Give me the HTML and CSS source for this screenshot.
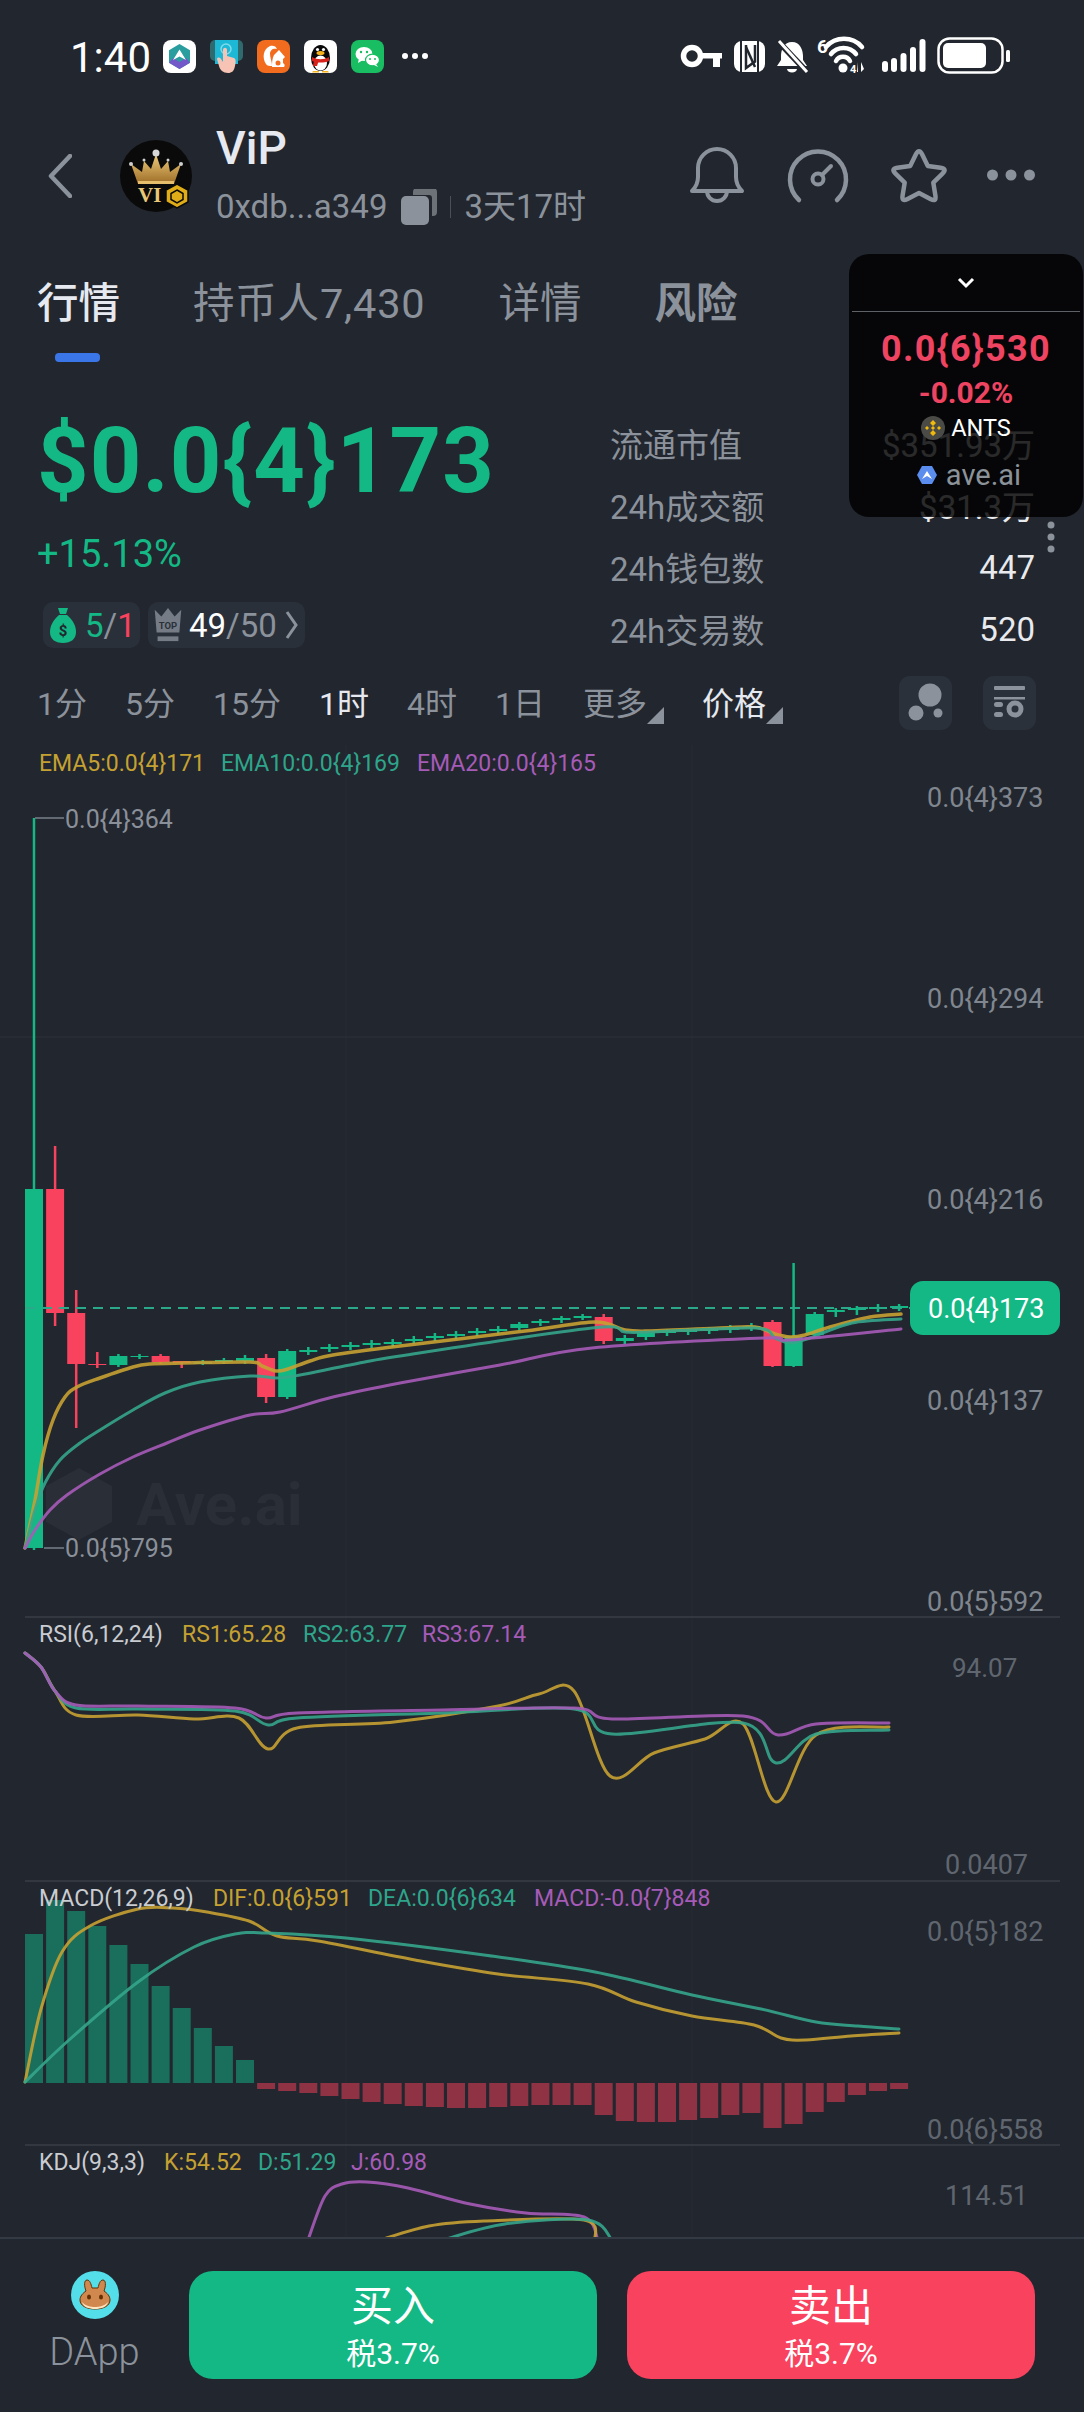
FILE: index.html
```html
<!DOCTYPE html>
<html lang="zh-CN">
<head>
    <meta charset="UTF-8">
    <meta name="viewport" content="width=device-width, initial-scale=1.0">
    <title>ViP 行情</title>
    <link rel="stylesheet" href="styles.css">
</head>
<body>

<div class="page">
    <div class="status-bar">
        <span class="clock">1:40</span>
        <div class="app-icons">
            <svg class="app-icon" viewBox="0 0 33 33"><rect width="33" height="33" rx="8" fill="#fff"/><path d="M16.5 4 27 10.2v12.6L16.5 29 6 22.8V10.2z" fill="#2a9d9e"/><path d="M6 22.8 10 18l6.5 4 6.5-4 4 4.8L16.5 29z" fill="#7358c9"/><path d="M16.5 9.5 23 20l-6.5-3.5L10 20z" fill="#fff"/></svg>
            <svg class="app-icon" viewBox="0 0 33 33"><rect y="0" width="33" height="21" rx="5" fill="#2f6b6e"/><rect x="5" y="0" width="23" height="24" fill="#1cb8d6"/><circle cx="16" cy="9" r="5" fill="none" stroke="#7fdcec" stroke-width="1.5"/><path d="M13 10c0-3 4-3 4 0v6l7 2c2 1 2 4 1 8-1 5-3 7-7 7-5 0-8-3-9-7l-2-7c0-2 3-2 4 0l2 3z" fill="#f6c3b4"/></svg>
            <svg class="app-icon" viewBox="0 0 33 33"><rect width="33" height="33" rx="8" fill="#f26c1f"/><path d="M9 24C5 18 6 9 13 6c3-1 6 0 7 3-4-1-7 1-7 5 0 4 2 7 2 12-2 0-5 0-6-2z" fill="#fff"/><path d="M17 15l5-5 6 7-2 2 0 4c2 1 2 3 1 4H15c0-4 0-8 2-12z" fill="#fff"/><circle cx="21" cy="23" r="2.5" fill="#f26c1f"/></svg>
            <svg class="app-icon" viewBox="0 0 33 33"><rect width="33" height="33" rx="7" fill="#fff"/><ellipse cx="16.5" cy="18" rx="9.5" ry="13" fill="#0a0a0a"/><ellipse cx="16.5" cy="23" rx="6.5" ry="7.5" fill="#fff"/><path d="M8 17c5 3 12 3 17 0v4c-5 2-12 2-17 0z" fill="#d8231c"/><path d="M10 20h5l-2 6h-4z" fill="#d8231c"/><ellipse cx="16.5" cy="13" rx="4" ry="2" fill="#f5b21b"/><circle cx="13.5" cy="9.5" r="1.6" fill="#fff"/><circle cx="19.5" cy="9.5" r="1.6" fill="#fff"/><path d="M9 31h6v1.5H8zM18 31h6l1 1.5h-7z" fill="#f5b21b"/></svg>
            <svg class="app-icon" viewBox="0 0 33 33"><rect width="33" height="33" rx="8" fill="#19be62"/><ellipse cx="13" cy="14" rx="8.5" ry="7" fill="#fff"/><path d="M8 18l-1 5 5-3z" fill="#fff"/><ellipse cx="21.5" cy="20" rx="7" ry="5.8" fill="#fff" stroke="#19be62" stroke-width="1.2"/><path d="M25 24l2 3-4-2z" fill="#fff"/><circle cx="10" cy="12" r="1.2" fill="#19be62"/><circle cx="16" cy="12" r="1.2" fill="#19be62"/><circle cx="19" cy="19" r="1" fill="#19be62"/><circle cx="24" cy="19" r="1" fill="#19be62"/></svg>
        </div>
        <svg class="status-more" viewBox="0 0 26 6"><circle cx="3" cy="3" r="3"/><circle cx="13" cy="3" r="3"/><circle cx="23" cy="3" r="3"/></svg>
        <svg class="status-right" viewBox="678 36 336 40">
            <circle cx="692" cy="56" r="8.5" fill="none" stroke="#fff" stroke-width="5.5"/>
            <rect x="700" y="53" width="22" height="5.5" fill="#fff"/><rect x="713" y="55" width="7" height="12" fill="#fff"/>
            <rect x="734" y="41" width="31" height="31" rx="8" fill="#fff"/>
            <path d="M741 40v33M758 40v33" stroke="#22262e" stroke-width="2"/><path d="M746 45v23l9-6.5V45" fill="none" stroke="#22262e" stroke-width="2.5"/><path d="M746 47l9 20" stroke="#22262e" stroke-width="2.5"/>
            <path d="M792 42c-8 0-11 8-11 14v4l-4 6h30l-4-6v-4c0-6-3-14-11-14z" fill="#fff"/><path d="M787 69a5 3.5 0 0 0 10 0z" fill="#fff"/>
            <path d="M777 40l31 33" stroke="#22262e" stroke-width="6"/><path d="M779 41l28 31" stroke="#fff" stroke-width="3"/>
            <text class="st-small" x="817" y="53">6</text>
            <path d="M826 47a24 24 0 0 1 36 0M831 54a16 16 0 0 1 25 0M836 61a8 8 0 0 1 14 0" fill="none" stroke="#fff" stroke-width="4.5" stroke-linecap="round"/>
            <circle cx="843" cy="68" r="4.5" fill="#fff"/><text class="st-tiny" x="850" y="73">4</text><path d="M858 62v10h-1zM861 62v10l3-3z" fill="#fff"/>
            <rect x="882" y="61" width="6" height="11" rx="3" fill="#fff"/><rect x="891" y="58" width="6" height="14" rx="3" fill="#fff"/><rect x="900.5" y="53" width="6" height="19" rx="3" fill="#fff"/><rect x="910" y="47" width="6" height="25" rx="3" fill="#fff"/><rect x="919.5" y="39" width="6" height="33" rx="3" fill="#fff"/>
            <rect x="938.5" y="38.5" width="64" height="34" rx="11" fill="none" stroke="#fff" stroke-width="2.5"/><rect x="943" y="43" width="43" height="25" rx="5" fill="#fff"/><rect x="1006" y="50" width="4" height="12" rx="1.5" fill="#fff"/>
        </svg>
    </div>

    <div class="top-header">
        <svg class="back-icon" viewBox="0 0 24 44"><path d="M22 2 3 22l19 20" fill="none" stroke="#8b929b" stroke-width="4.5" stroke-linecap="round" stroke-linejoin="round"/></svg>
        <svg class="avatar" viewBox="0 0 72 72">
            <defs><linearGradient id="gold" x1="0" y1="0" x2="0" y2="1"><stop offset="0" stop-color="#f0cd7c"/><stop offset="1" stop-color="#9c6c26"/></linearGradient></defs>
            <circle cx="36" cy="36" r="36" fill="#0a0a0a"/>
            <path d="M18 44 11 24l11 8 2-11 7 8 5-15 5 15 7-8 2 11 11-8-7 20z" fill="url(#gold)"/>
            <circle cx="36" cy="13" r="3.5" fill="#d8d8d8"/><circle cx="11" cy="24" r="2" fill="#cfcfcf"/><circle cx="61" cy="24" r="2" fill="#cfcfcf"/><circle cx="24" cy="20" r="1.5" fill="#cfcfcf"/><circle cx="48" cy="20" r="1.5" fill="#cfcfcf"/><rect x="18" y="41" width="36" height="3" fill="#e5bd6b"/>
            <text class="avatar-text" x="18" y="62">VI</text>
            <path d="M57 44 68 50v12l-11 6-11-6V50z" fill="#e0ad18" stroke="#0a0a0a" stroke-width="1.5"/><path d="M57 50l6 3.5v6L57 63l-6-3.5v-6z" fill="none" stroke="#0a0a0a" stroke-width="1.5"/>
        </svg>
        <div class="token-info">
            <div class="token-name">ViP</div>
            <div class="token-sub">
                <span>0xdb...a349</span>
                <svg class="copy-icon" viewBox="0 0 36 36"><path d="M12 3a4 4 0 0 1 4-4h16a4 4 0 0 1 4 4v20a4 4 0 0 1-4 4h-1V9a3 3 0 0 0-3-3H12z" fill="#6d7279"/><rect y="7" width="28" height="29" rx="5" fill="#8b929b"/></svg>
                <i class="sub-divider"></i>
                <span>3天17时</span>
            </div>
        </div>
        <div class="header-actions">
            <svg class="act-bell" viewBox="0 0 60 60"><path d="M5 45q6-6 6-14v-9a19 19 0 0 1 38 0v9q0 8 6 14zM20 45a10 10 0 0 0 20 0" fill="none" stroke="#8b929b" stroke-width="4" stroke-linejoin="round"/></svg>
            <svg class="act-gauge" viewBox="0 0 64 56"><path d="M13 52A28 28 0 1 1 51 52" fill="none" stroke="#8b929b" stroke-width="4.5" stroke-linecap="round"/><circle cx="32" cy="31" r="5.5" fill="none" stroke="#8b929b" stroke-width="4"/><path d="M36 27l9-9" stroke="#8b929b" stroke-width="4" stroke-linecap="round"/></svg>
            <svg class="act-star" viewBox="0 0 60 60"><path d="M26.9 8.3Q30 2 33.1 8.3L38.8 19.9 51.6 21.7Q58.5 22.7 53.5 27.6L44.3 36.6 46.4 49.6Q47.6 56.3 41.4 53L30 47 18.6 53Q12.4 56.3 13.6 49.4L15.7 36.6 6.5 27.6Q1.5 22.7 8.4 21.7L21.2 19.9Z" fill="none" stroke="#8b929b" stroke-width="4.5" stroke-linejoin="round"/></svg>
            <svg class="act-more" viewBox="0 0 48 12"><circle cx="5.5" cy="6" r="5.5"/><circle cx="24" cy="6" r="5.5"/><circle cx="42.5" cy="6" r="5.5"/></svg>
        </div>
    </div>

    <div class="tabs">
        <div class="tab active">行情<i class="tab-line"></i></div>
        <div class="tab holders">持币人7,430</div>
        <div class="tab">详情</div>
        <div class="tab risk">风险</div>
    </div>

    <div class="summary">
        <div class="summary-left">
            <div class="big-price">$0.0{4}173</div>
            <div class="big-change">+15.13%</div>
            <div class="pills">
                <div class="pill bag">
                    <svg class="pill-icon" viewBox="0 0 26 36"><path d="M8 1h10l-2 6h-6zM9 8h8c6 5 9 11 9 17 0 7-5 11-13 11S0 32 0 25c0-6 3-12 9-17z" fill="#14b885"/><text class="bag-sign" x="13" y="29">$</text></svg>
                    <span class="green-text">5</span><span class="gray-text">/</span><span class="red-text">1</span>
                </div>
                <div class="pill rank">
                    <svg class="pill-icon crown" viewBox="0 0 30 38"><path d="M1 3l7 7 7-9 7 9 7-7-2 24H3z" fill="#757c86"/><text class="top-sign" x="15" y="23">TOP</text><rect x="4" y="31" width="22" height="5" fill="#757c86"/></svg>
                    <span class="white-text">49</span><span class="gray-text">/50</span>
                    <svg class="pill-arrow" viewBox="0 0 13 30"><path d="M2 2l9 13-9 13" fill="none" stroke="#8b929b" stroke-width="3"/></svg>
                </div>
            </div>
        </div>
        <div class="stats">
            <div class="stat-row"><span>流通市值</span><b>$351.93万</b></div>
            <div class="stat-row"><span>24h成交额</span><b>$31.3万</b></div>
            <div class="stat-row"><span>24h钱包数</span><b>447</b></div>
            <div class="stat-row"><span>24h交易数</span><b>520</b></div>
        </div>
    </div>

    <div class="timeframes">
        <span>1分</span>
        <span>5分</span>
        <span>15分</span>
        <span class="on">1时</span>
        <span>4时</span>
        <span>1日</span>
        <span class="with-corner">更多<i class="corner"></i></span>
        <span class="with-corner on">价格<i class="corner"></i></span>
        <div class="tool-buttons">
            <div class="tool-btn"><svg viewBox="0 0 53 54"><circle cx="31" cy="19" r="11.5" fill="#8b929b"/><circle cx="17" cy="37" r="7.5" fill="#8b929b"/><circle cx="39" cy="37" r="4.5" fill="#8b929b"/></svg></div>
            <div class="tool-btn"><svg viewBox="0 0 53 54"><rect x="11" y="10" width="31" height="4" rx="1" fill="#8b929b"/><rect x="11" y="21" width="31" height="2.5" fill="#8b929b"/><rect x="11" y="26" width="9" height="5" rx="2.5" fill="#8b929b"/><rect x="11" y="36" width="9" height="5" rx="2.5" fill="#8b929b"/><circle cx="32" cy="33" r="6" fill="none" stroke="#8b929b" stroke-width="5"/></svg></div>
        </div>
    </div>

    <svg id="chart" class="chart" viewBox="0 740 1084 1497">
        <g id="grid"></g>

        <text class="lg ema5" x="39" y="771">EMA5:0.0{4}171</text>
        <text class="lg ema10" x="221" y="771">EMA10:0.0{4}169</text>
        <text class="lg ema20" x="417" y="771">EMA20:0.0{4}165</text>

        <g id="wm" class="watermark">
            <path d="M79 1468l33 18v36l-33 18-33-18v-36z"/>
            <text class="wm-text" x="136" y="1525">Ave.ai</text>
        </g>

        <g id="candles"></g>
        <g id="lines"></g>

        <text class="axis" x="927" y="807">0.0{4}373</text>
        <text class="axis" x="927" y="1008">0.0{4}294</text>
        <text class="axis" x="927" y="1209">0.0{4}216</text>
        <text class="axis" x="927" y="1410">0.0{4}137</text>
        <text class="axis" x="927" y="1611">0.0{5}592</text>

        <path class="tick" d="M35 818H64M44 1548H64"/>
        <text class="mark" x="65" y="828">0.0{4}364</text>
        <text class="mark" x="65" y="1557">0.0{5}795</text>

        <rect class="now-pill" x="910" y="1281" width="150" height="54" rx="13"/>
        <text class="now-text" x="928" y="1318">0.0{4}173</text>

        <text class="lg name" x="39" y="1642">RSI(6,12,24)</text>
        <text class="lg ema5" x="182" y="1642">RS1:65.28</text>
        <text class="lg ema10" x="303" y="1642">RS2:63.77</text>
        <text class="lg ema20" x="422" y="1642">RS3:67.14</text>
        <text class="axis dim small" x="952" y="1677">94.07</text>
        <text class="axis dim" x="945" y="1874">0.0407</text>

        <text class="lg name" x="39" y="1906">MACD(12,26,9)</text>
        <text class="lg ema5" x="213" y="1906">DIF:0.0{6}591</text>
        <text class="lg ema10" x="368" y="1906">DEA:0.0{6}634</text>
        <text class="lg ema20" x="534" y="1906">MACD:-0.0{7}848</text>
        <text class="axis dim" x="927" y="1941">0.0{5}182</text>
        <text class="axis dim" x="927" y="2139">0.0{6}558</text>

        <text class="lg name" x="39" y="2170">KDJ(9,3,3)</text>
        <text class="lg ema5" x="164" y="2170">K:54.52</text>
        <text class="lg ema10" x="258" y="2170">D:51.29</text>
        <text class="lg ema20" x="351" y="2170">J:60.98</text>
        <text class="axis dim" x="945" y="2205">114.51</text>
    </svg>

    <div class="bottom-bar">
        <div class="dapp">
            <svg class="dapp-icon" viewBox="0 0 48 48"><circle cx="24" cy="24" r="24" fill="#53dee9"/><path d="M15 20c-2-5-2-11 1-11 3 0 4 4 5 8h6c1-4 2-8 5-8 3 0 3 6 1 11 3 2 6 5 6 9 0 6-7 9-15 9S9 35 9 29c0-4 3-7 6-9z" fill="#d1884f" stroke="#633001" stroke-width="1"/><path d="M11 31c3 4 9 5 13 5s10-1 13-5c-1 5-7 7-13 7s-12-2-13-7z" fill="#fee4bf"/><ellipse cx="18" cy="26" rx="2" ry="2.6" fill="#633001"/><ellipse cx="30" cy="26" rx="2" ry="2.6" fill="#633001"/></svg>
            <span>DApp</span>
        </div>
        <div class="trade-btn buy"><strong>买入</strong><small>税3.7%</small></div>
        <div class="trade-btn sell"><strong>卖出</strong><small>税3.7%</small></div>
    </div>

    <div class="float-card">
        <div class="card-head"><svg viewBox="0 0 18 12"><path d="M2 2l7 7 7-7" fill="none" stroke="#fff" stroke-width="3"/></svg></div>
        <div class="card-price">0.0{6}530</div>
        <div class="card-change">-0.02%</div>
        <div class="card-pair">
            <svg viewBox="0 0 24 24"><circle cx="12" cy="12" r="12" fill="#4a4a46"/><path d="M12 4l3 3-3 3-3-3zM6 10l2 2-2 2-2-2zM18 10l2 2-2 2-2-2zM12 14l3 3-3 3-3-3zM12 10l2 2-2 2-2-2z" fill="#f0b90b"/></svg>
            <span>ANTS</span>
        </div>
        <div class="card-site">
            <svg viewBox="0 0 20 20"><path d="M5 1h10l5 9-5 9H5l-5-9z" fill="#5b8def"/><path d="M10 6l5 8-5-3-5 3z" fill="#fff"/></svg>
            <span>ave.ai</span>
        </div>
    </div>
    <svg class="kebab" viewBox="0 0 8 32"><circle cx="4" cy="4" r="3.5"/><circle cx="4" cy="16" r="3.5"/><circle cx="4" cy="28" r="3.5"/></svg>
</div>

<script src="chart.js"></script>
</body>
</html>
```

FILE: styles.css
```css
* {
    box-sizing: border-box;
}
html, body {
    margin: 0;
    padding: 0;
}
body {
    font-family: Roboto, "Noto Sans CJK SC", sans-serif;
    background-color: #22262e;
    color: #8b929b;
}
.page {
    position: relative;
    width: 1084px;
    height: 2412px;
    overflow: hidden;
    display: flex;
    flex-direction: column;
}

/* status bar */
.status-bar {
    height: 112px;
    flex: none;
    display: flex;
    align-items: center;
    padding-left: 70px;
}
.clock {
    font-size: 42px;
    color: #fff;
    width: 93px;
    padding-top: 2px;
}
.app-icons {
    display: flex;
    gap: 14px;
}
.app-icon {
    width: 33px;
    height: 33px;
    display: block;
}
.status-more {
    width: 26px;
    height: 6px;
    margin-left: 18px;
    fill: #fff;
}
.status-right {
    width: 336px;
    height: 40px;
    margin-left: auto;
    margin-right: 70px;
}
.st-small {
    font-size: 19px;
    font-weight: 700;
    fill: #fff;
}
.st-tiny {
    font-size: 11px;
    font-weight: 700;
    fill: #fff;
}

/* header */
.top-header {
    height: 128px;
    flex: none;
    display: flex;
    align-items: center;
    padding-left: 48px;
}
.back-icon {
    width: 24px;
    height: 44px;
    flex: none;
}
.avatar {
    width: 72px;
    height: 72px;
    flex: none;
    margin-left: 48px;
}
.avatar-text {
    font-family: "Liberation Serif", serif;
    font-size: 21px;
    font-weight: 700;
    fill: #e8c777;
}
.token-info {
    margin-left: 24px;
    margin-top: -4px;
}
.token-name {
    font-size: 46px;
    line-height: 54px;
    font-weight: 500;
    color: #e6e9ef;
}
.token-sub {
    display: flex;
    align-items: center;
    font-size: 33px;
    line-height: 42px;
    margin-top: 11px;
}
.copy-icon {
    width: 36px;
    height: 36px;
    margin-left: 14px;
}
.sub-divider {
    width: 1px;
    height: 22px;
    background-color: #4a5058;
    margin: 0 13px;
}
.header-actions {
    position: absolute;
    left: 687px;
    top: 146px;
    width: 352px;
    height: 60px;
    display: flex;
    align-items: center;
}
.act-bell { width: 60px; height: 60px; }
.act-gauge { width: 64px; height: 56px; margin-left: 39px; }
.act-star { width: 60px; height: 60px; margin-left: 39px; }
.act-more { width: 48px; height: 12px; margin-left: 38px; fill: #8b929b; margin-top: -2px; }

/* tabs */
.tabs {
    height: 130px;
    flex: none;
    margin-bottom: 44px;
    padding: 40px 0 0 37px;
    display: flex;
    gap: 73px;
    font-size: 41.5px;
    line-height: 48px;
}
.tab.active {
    color: #e6e9ef;
    font-weight: 500;
}
.tab.risk {
    font-weight: 700;
}
.tab.holders {
    letter-spacing: 0.8px;
}
.tab-line {
    display: block;
    width: 45px;
    height: 9px;
    margin: 25px 0 0 18px;
    border-radius: 4px;
    background-color: #3b76e8;
}

/* price and stats */
.summary {
    display: flex;
    height: 248px;
    flex: none;
    padding: 0 49px 0 37px;
}
.summary-left {
    width: 573px;
    flex: none;
}
.big-price {
    font-size: 90px;
    line-height: 92px;
    margin-top: 2px;
    font-weight: 700;
    color: #14b885;
    letter-spacing: 1.1px;
}
.big-change {
    font-size: 38px;
    line-height: 48px;
    margin-top: 22px;
    color: #14b885;
}
.pills {
    display: flex;
    gap: 8px;
    margin-top: 24px;
    margin-left: 6px;
}
.pill {
    height: 46px;
    display: flex;
    align-items: center;
    border-radius: 10px;
    background-color: #2a303a;
    font-size: 33px;
}
.pill.bag {
    width: 97px;
    padding-left: 7px;
}
.pill.rank {
    width: 157px;
    padding-left: 5px;
}
.pill-icon {
    width: 26px;
    height: 36px;
    margin-right: 9px;
}
.pill-icon.crown {
    width: 30px;
    margin-right: 6px;
}
.pill-arrow {
    width: 13px;
    height: 30px;
    margin-left: 8px;
}
.bag-sign {
    font-size: 15px;
    font-weight: 700;
    text-anchor: middle;
    fill: #22262e;
}
.top-sign {
    font-size: 10px;
    font-weight: 700;
    text-anchor: middle;
    fill: #2a303a;
}
.green-text { color: #14b885; }
.gray-text { color: #8b929b; }
.red-text { color: #f9425e; }
.white-text { color: #fff; }
.stats {
    flex: 1;
    margin-top: -2px;
}
.stat-row {
    height: 62px;
    display: flex;
    justify-content: space-between;
    align-items: center;
    font-size: 33px;
}
.stat-row b {
    font-weight: 400;
    color: #e8eaed;
}

/* timeframes */
.timeframes {
    height: 54px;
    flex: none;
    margin-top: 14px;
    padding: 0 48px 0 37px;
    display: flex;
    align-items: center;
    gap: 38px;
    font-size: 32px;
}
.timeframes > span {
    margin-top: -4px;
}
.timeframes .on {
    color: #e6e9ef;
}
.with-corner {
    display: flex;
    align-items: flex-end;
}
.corner {
    width: 0;
    height: 0;
    border-left: 17px solid transparent;
    border-bottom: 17px solid #8b929b;
}
.tool-buttons {
    margin-left: auto;
    display: flex;
    gap: 31px;
}
.tool-btn {
    width: 53px;
    height: 54px;
    border-radius: 11px;
    background-color: #2b313b;
}
.tool-btn svg {
    display: block;
    width: 53px;
    height: 54px;
}

/* chart */
.chart {
    display: block;
    width: 1084px;
    height: 1497px;
    flex: none;
    margin-top: 10px;
}
.grid-line {
    stroke: #2a2f37;
    stroke-width: 1.5;
}
.grid-faint {
    stroke: #272b33;
    stroke-width: 1;
}
.sep-line {
    stroke: #3a3f47;
    stroke-width: 1.5;
}
.lg {
    font-size: 23px;
}
.lg.name { fill: #c9ccd1; }
.lg.ema5 { fill: #c5a132; }
.lg.ema10 { fill: #2ea58b; }
.lg.ema20 { fill: #a65bb8; }
.axis {
    font-size: 27px;
    fill: #80868f;
}
.axis.dim {
    fill: #60666f;
}
.axis.small {
    font-size: 26px;
}
.mark {
    font-size: 25px;
    fill: #8a909a;
}
.tick {
    fill: none;
    stroke: #7a808a;
    stroke-width: 1.5;
}
.watermark {
    fill: #2a2e36;
}
.wm-text {
    font-size: 60px;
    font-weight: 700;
}
.now-pill {
    fill: #14b885;
}
.now-text {
    font-size: 27px;
    fill: #fff;
}

/* bottom bar */
.bottom-bar {
    height: 175px;
    flex: none;
    border-top: 2px solid #343a43;
    background-color: #22262e;
    display: flex;
    padding-top: 32px;
    gap: 30px;
}
.dapp {
    width: 159px;
    flex: none;
    display: flex;
    flex-direction: column;
    align-items: center;
    padding-left: 30px;
    font-size: 38px;
    font-weight: 300;
    line-height: 42px;
}
.dapp-icon {
    width: 48px;
    height: 48px;
    margin-bottom: 12px;
}
.trade-btn {
    width: 408px;
    height: 108px;
    border-radius: 24px;
    color: #fff;
    display: flex;
    flex-direction: column;
    align-items: center;
}
.trade-btn strong {
    font-size: 42px;
    font-weight: 400;
    line-height: 50px;
    margin-top: 11px;
}
.trade-btn small {
    font-size: 30px;
    line-height: 36px;
    margin-top: 4px;
}
.buy { background-color: #14b885; }
.sell { background-color: #f9425e; }

/* floating price card */
.float-card {
    position: absolute;
    left: 849px;
    top: 254px;
    width: 234px;
    height: 263px;
    border-radius: 20px;
    background-color: rgba(0, 0, 0, 0.82);
    display: flex;
    flex-direction: column;
    align-items: center;
}
.card-head {
    width: 228px;
    height: 58px;
    flex: none;
    border-bottom: 1.5px solid #5e6266;
    display: flex;
    justify-content: center;
    padding-top: 23px;
}
.card-head svg {
    width: 18px;
    height: 12px;
}
.card-price {
    font-size: 36px;
    line-height: 44px;
    font-weight: 700;
    letter-spacing: 1.3px;
    color: #ee4462;
    margin-top: 15px;
}
.card-change {
    font-size: 30px;
    line-height: 38px;
    font-weight: 700;
    color: #ee4462;
    margin-top: 3px;
}
.card-pair {
    display: flex;
    align-items: center;
    gap: 6px;
    font-size: 23.5px;
    line-height: 30px;
    color: #fff;
    margin-top: 1px;
}
.card-pair svg {
    width: 24px;
    height: 24px;
}
.card-site {
    display: flex;
    align-items: center;
    gap: 9px;
    padding-left: 6px;
    font-size: 29px;
    line-height: 34px;
    color: #8b9298;
    margin-top: 15px;
}
.card-site svg {
    width: 20px;
    height: 20px;
}
.kebab {
    position: absolute;
    left: 1047px;
    top: 521px;
    width: 8px;
    height: 32px;
    fill: #8b929b;
}
```

FILE: chart.js
```js
const NS = 'http://www.w3.org/2000/svg';
const GREEN = '#14b885';
const RED = '#f9425e';
const GOLD = '#c5a132';
const TEAL = '#35a58b';
const PURPLE = '#a65bb8';

const X0 = 34;
const STEP = 21.1;
const BODY = 18;

function add(parent, tag, attrs) {
    const el = document.createElementNS(NS, tag);
    for (const k in attrs) el.setAttribute(k, attrs[k]);
    parent.appendChild(el);
    return el;
}

// catmull-rom through the points, so the lines come out round
function smooth(pts) {
    let d = 'M' + pts[0][0] + ' ' + pts[0][1];
    for (let i = 0; i < pts.length - 1; i++) {
        const p0 = pts[i - 1] || pts[i];
        const p1 = pts[i];
        const p2 = pts[i + 1];
        const p3 = pts[i + 2] || p2;
        const c1x = p1[0] + (p2[0] - p0[0]) / 6;
        const c1y = p1[1] + (p2[1] - p0[1]) / 6;
        const c2x = p2[0] - (p3[0] - p1[0]) / 6;
        const c2y = p2[1] - (p3[1] - p1[1]) / 6;
        d += 'C' + c1x.toFixed(1) + ' ' + c1y.toFixed(1) + ' ' + c2x.toFixed(1) + ' ' + c2y.toFixed(1) + ' ' + p2[0] + ' ' + p2[1];
    }
    return d;
}

function drawLine(parent, pts, color, width) {
    add(parent, 'path', {
        d: smooth(pts), fill: 'none', stroke: color,
        'stroke-width': width || 3, 'stroke-linecap': 'round', opacity: 0.9
    });
}

// grid and separators
const grid = document.getElementById('grid');
[346, 692].forEach(x => add(grid, 'line', { class: 'grid-faint', x1: x, x2: x, y1: 745, y2: 2237 }));
add(grid, 'line', { class: 'grid-line', x1: 0, x2: 1084, y1: 1037, y2: 1037 });
[1617, 1881, 2145].forEach(y => add(grid, 'line', { class: 'sep-line', x1: 25, x2: 1060, y1: y, y2: y }));

// candles: colour, body top, body bottom, wick top, wick bottom
const candles = [
    ['g', 1189, 1548, 818, 1550], ['r', 1189, 1313, 1146, 1326], ['r', 1313, 1364, 1290, 1428],
    ['r', 1364, 1365, 1352, 1368], ['g', 1356, 1365, 1354, 1367], ['g', 1356, 1357, 1354, 1359],
    ['r', 1356, 1362, 1354, 1364], ['r', 1361, 1363, 1361, 1368], ['g', 1362, 1364, 1360, 1365],
    ['g', 1360, 1362, 1358, 1364], ['g', 1358, 1361, 1355, 1364], ['r', 1358, 1397, 1354, 1403],
    ['g', 1351, 1397, 1349, 1399], ['g', 1350, 1352, 1347, 1355], ['g', 1347, 1349, 1344, 1352],
    ['g', 1345, 1347, 1342, 1350], ['g', 1343, 1345, 1340, 1348], ['g', 1342, 1344, 1339, 1347],
    ['g', 1339, 1341, 1336, 1344], ['g', 1336, 1338, 1333, 1341], ['g', 1334, 1336, 1331, 1339],
    ['g', 1331, 1333, 1328, 1336], ['g', 1329, 1331, 1326, 1334], ['g', 1324, 1328, 1322, 1330],
    ['g', 1321, 1323, 1319, 1326], ['g', 1318, 1320, 1316, 1323], ['g', 1316, 1318, 1314, 1320],
    ['r', 1317, 1341, 1314, 1344], ['g', 1338, 1341, 1335, 1344], ['g', 1333, 1337, 1331, 1340],
    ['g', 1331, 1333, 1329, 1336], ['g', 1330, 1332, 1328, 1335], ['g', 1329, 1331, 1327, 1334],
    ['g', 1327, 1330, 1325, 1333], ['g', 1326, 1328, 1323, 1331], ['r', 1322, 1366, 1320, 1367],
    ['g', 1336, 1366, 1263, 1367], ['g', 1314, 1335, 1312, 1337], ['g', 1310, 1312, 1308, 1317],
    ['g', 1308, 1310, 1306, 1315], ['g', 1307, 1309, 1304, 1312], ['g', 1306, 1308, 1304, 1311]
];
const cg = document.getElementById('candles');
candles.forEach((c, i) => {
    const x = X0 + STEP * i;
    const color = c[0] === 'g' ? GREEN : RED;
    add(cg, 'line', { x1: x, x2: x, y1: c[3], y2: c[4], stroke: color, 'stroke-width': 2.5 });
    add(cg, 'rect', { x: x - BODY / 2, y: c[1], width: BODY, height: c[2] - c[1], fill: color });
});
add(cg, 'line', {
    x1: 25, x2: 910, y1: 1308, y2: 1308, stroke: '#2aa98a',
    'stroke-width': 2, 'stroke-dasharray': '10 7'
});

// MACD histogram, y of the far end of each bar (zero line is 2083)
const macd = [1934, 1900, 1911, 1926, 1945, 1964, 1986, 2008, 2028, 2046, 2060,
    2089, 2091, 2093, 2096, 2099, 2102, 2104, 2106, 2107, 2108, 2108, 2107, 2106, 2105, 2105, 2105,
    2115, 2121, 2122, 2122, 2120, 2118, 2115, 2113, 2128, 2124, 2112, 2102, 2095, 2091, 2089];
macd.forEach((y, i) => {
    const x = X0 + STEP * i - BODY / 2;
    add(cg, 'rect', {
        x: x, y: Math.min(y, 2083), width: BODY, height: Math.abs(y - 2083),
        fill: y < 2083 ? '#1a6f5c' : '#8e3244'
    });
});

const lines = document.getElementById('lines');

// EMA
drawLine(lines, [[25, 1548], [35, 1500], [43, 1455], [53, 1420], [65, 1397], [77, 1387], [100, 1378], [133, 1367], [150, 1364], [183, 1363], [250, 1362], [262, 1366], [276, 1371], [288, 1369], [310, 1361], [333, 1355], [400, 1346], [525, 1331], [595, 1322], [625, 1330], [650, 1331], [720, 1328], [755, 1327], [775, 1334], [790, 1337], [805, 1335], [830, 1327], [870, 1317], [901, 1314]], GOLD, 3.5);
drawLine(lines, [[25, 1548], [35, 1510], [45, 1483], [60, 1460], [80, 1443], [100, 1430], [133, 1410], [165, 1393], [200, 1382], [250, 1376], [277, 1378], [300, 1375], [350, 1365], [400, 1356], [592, 1328], [625, 1332], [650, 1332], [755, 1328], [775, 1338], [790, 1343], [810, 1338], [852, 1323], [901, 1319]], TEAL, 3);
drawLine(lines, [[25, 1548], [35, 1530], [50, 1510], [67, 1495], [100, 1474], [133, 1457], [167, 1443], [200, 1430], [250, 1415], [280, 1412], [333, 1397], [400, 1383], [500, 1365], [592, 1348], [765, 1338], [790, 1340], [901, 1329]], PURPLE, 3);

// RSI
drawLine(lines, [[25, 1653], [41, 1667], [55, 1691], [76, 1715], [138, 1715], [194, 1719], [239, 1718], [268, 1749], [297, 1728], [394, 1722], [498, 1706], [539, 1694], [574, 1691], [610, 1776], [654, 1753], [705, 1739], [743, 1724], [776, 1802], [816, 1735], [889, 1727]], GOLD);
drawLine(lines, [[25, 1653], [41, 1667], [55, 1691], [76, 1708], [138, 1709], [235, 1711], [268, 1725], [297, 1718], [443, 1713], [574, 1709], [612, 1734], [743, 1723], [776, 1763], [816, 1734], [889, 1730]], TEAL);
drawLine(lines, [[25, 1653], [41, 1667], [55, 1691], [76, 1705], [138, 1706], [235, 1708], [266, 1718], [297, 1713], [443, 1710], [574, 1708], [612, 1719], [743, 1716], [778, 1735], [816, 1724], [889, 1723]], PURPLE);

// MACD
drawLine(lines, [[25, 2082], [41, 2009], [62, 1952], [90, 1926], [138, 1909], [173, 1908], [207, 1912], [249, 1921], [277, 1936], [318, 1941], [415, 1960], [498, 1974], [588, 1984], [636, 2002], [692, 2016], [754, 2025], [781, 2038], [806, 2040], [851, 2036], [899, 2033]], GOLD);
drawLine(lines, [[25, 2082], [69, 2040], [138, 1982], [194, 1947], [235, 1934], [266, 1933], [346, 1938], [484, 1955], [595, 1972], [692, 1995], [761, 2009], [816, 2022], [858, 2026], [899, 2029]], TEAL);

// KDJ, cut off by the bottom bar
drawLine(lines, [[308, 2240], [325, 2196], [342, 2184], [367, 2182], [408, 2188], [470, 2204], [526, 2213], [584, 2217], [598, 2240]], PURPLE);
drawLine(lines, [[380, 2240], [429, 2226], [484, 2221], [584, 2220], [595, 2240]], GOLD);
drawLine(lines, [[443, 2240], [505, 2224], [588, 2220], [612, 2240]], TEAL);
```
